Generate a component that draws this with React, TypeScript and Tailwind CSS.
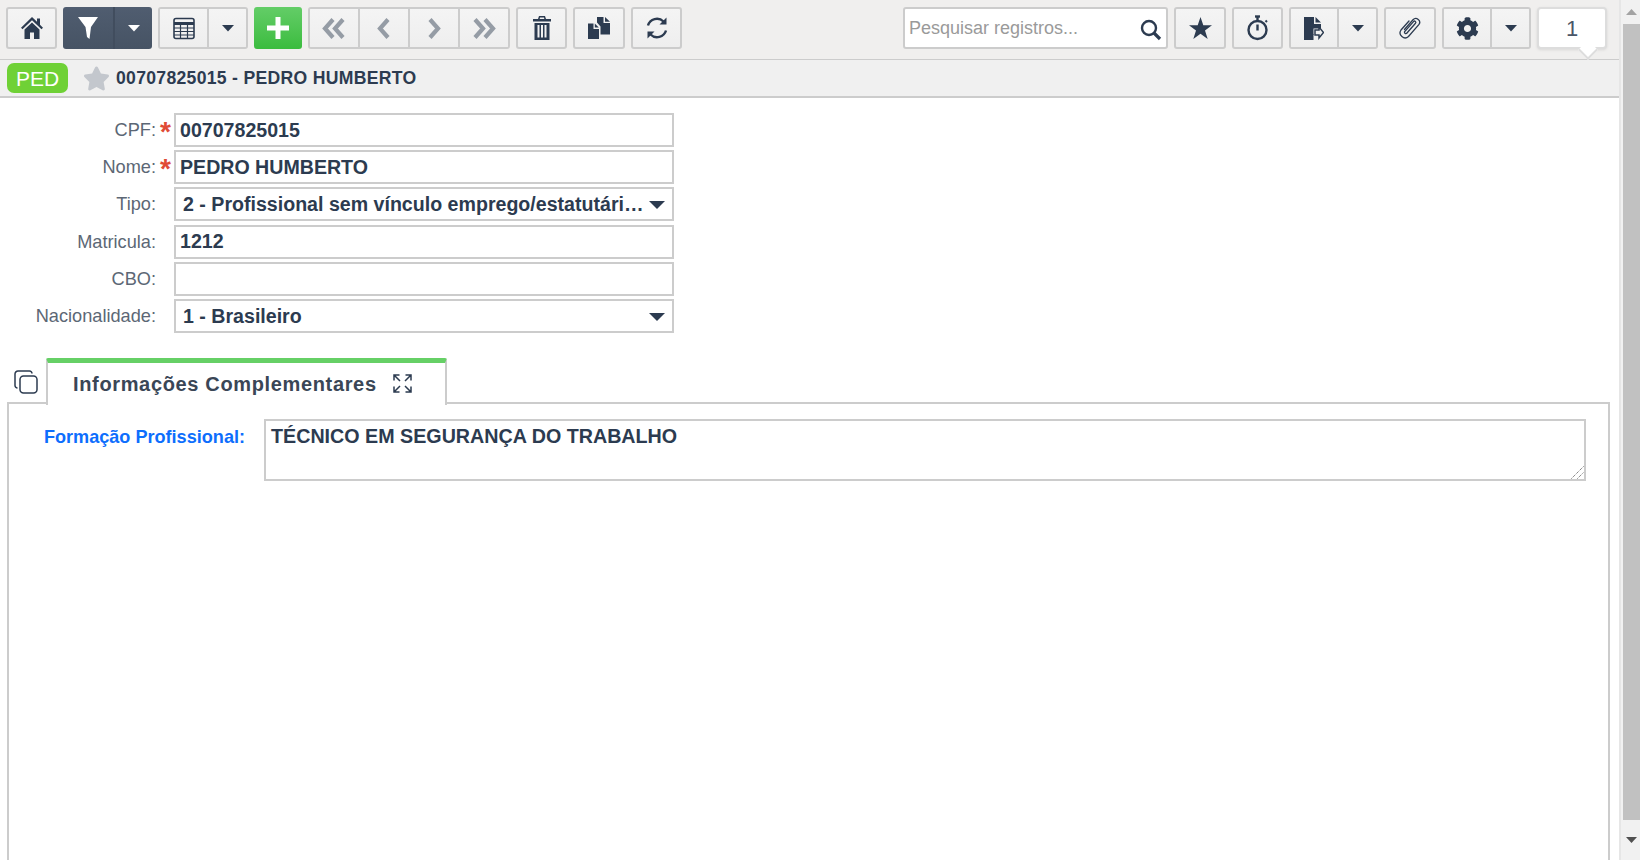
import React from "react";
import { FaStar, FaCog } from "react-icons/fa";

const fill = "bg-gradient-to-b from-[#f4f4f4] to-[#eeeeee]";
const cell = `flex h-full items-center justify-center ${fill}`;
const box = "flex h-[42px] shrink-0 overflow-hidden rounded-[3px] border-2 border-[#cccccc]";
const single = `flex h-[42px] shrink-0 items-center justify-center rounded-[3px] border-2 border-[#cccccc] ${fill}`;
const ink = "#2c3b50";

function Caret({ color = ink }: { color?: string }) {
  return (
    <svg width="14" height="8" viewBox="0 0 14 8"><path d="M1 1h12L7 7.5z" fill={color} /></svg>
  );
}

function Split({ w, main, color }: { w: string; main: React.ReactNode; color?: string }) {
  return (
    <div className={`${box} ${w}`}>
      <div className={`${cell} flex-1 border-r-2 border-[#cccccc]`}>{main}</div>
      <div className={`${cell} w-[37px]`}><Caret color={color} /></div>
    </div>
  );
}

function Chevron({ dir, double }: { dir: "l" | "r"; double?: boolean }) {
  const pts = dir === "l" ? (x: number) => `${x + 10},2.500 ${x + 2},11.500 ${x + 10},20.500` : (x: number) => `${x + 2},2.500 ${x + 10},11.500 ${x + 2},20.500`;
  return (
    <svg width="26" height="23" viewBox="0 0 26 23" fill="none" stroke="#959ca5" strokeWidth="4.200">
      {double ? (
        <>
          <polyline points={pts(2)} />
          <polyline points={pts(12)} />
        </>
      ) : (
        <polyline points={pts(7)} />
      )}
    </svg>
  );
}

function Field({ label, required, value, select }: { label: string; required?: boolean; value?: string; select?: boolean }) {
  return (
    <div className="flex h-[34px] items-center">
      <span className="w-[156px] pt-[1.500px] text-right text-[18.200px] text-[#5c6775]">{label}</span>
      <span className="flex h-full w-[18px] items-start justify-center pt-[5px] pl-[1px] text-[28px] font-bold leading-[28px] text-[#e04b35]">{required ? "*" : ""}</span>
      {select ? (
        <div className="flex h-full w-[500px] items-center border-2 border-[#cccccc] bg-white pl-[7px] pr-[7px] pt-[1.500px] text-[19.600px] font-bold text-[#2c3b50]">
          <span className="min-w-0 flex-1 whitespace-nowrap">{value}</span>
          <span className="ml-[2px] flex shrink-0"><svg width="16" height="8" viewBox="0 0 16 8"><path d="M0 0h16L8 8z" fill={ink} /></svg></span>
        </div>
      ) : (
        <input readOnly value={value ?? ""} className="h-full w-[500px] border-2 border-[#cccccc] bg-white px-[4px] text-[19.600px] font-bold text-[#2c3b50] outline-none" />
      )}
    </div>
  );
}

export default function App() {
  return (
    <div className="flex h-[860px] w-[1640px] overflow-hidden bg-white font-['Liberation_Sans',Arial,sans-serif]">
      <div className="flex w-[1619px] shrink-0 flex-col">
        {/* toolbar */}
        <div className="flex h-[59px] shrink-0 gap-[6px] bg-[#f0efee] pl-[6px] pr-[12px] pt-[7px]">
          <div className={`${single} w-[51px]`}>
            <svg width="22" height="22" viewBox="0 0 22 22" fill={ink}>
              <path d="M11 0 16 4.800V1.500h3v6.200l3 3-1.500 1.500L11 3.200 1.500 12.200 0 10.700z" />
              <path d="M3.500 12.500 11 5.500l7.500 7V22h-5.500v-6.500H9V22H3.500z" />
            </svg>
          </div>

          <div className="flex h-[42px] w-[89px] shrink-0 overflow-hidden rounded-[3px] bg-gradient-to-b from-[#505d70] to-[#465364]">
            <div className="flex flex-1 items-center justify-center border-r-2 border-[#414d5e]">
              <svg width="20" height="22" viewBox="0 0 20 22"><path d="M0 0h20l-7 10-1.500 12-2.500-2L7.500 10z" fill="#ffffff" /></svg>
            </div>
            <div className="flex w-[37px] items-center justify-center"><Caret color="#ffffff" /></div>
          </div>

          <Split w="w-[90px]" main={
            <svg width="22" height="23" viewBox="0 0 22 23" fill="none" stroke={ink}>
              <rect x="1" y="1.500" width="20" height="20" rx="2" strokeWidth="1.600" />
              <path d="M1 6.500h20" strokeWidth="3" />
              <path d="M1 11h20M1 14.500h20M1 18h20M7.500 6v15M14.500 6v15" strokeWidth="1.200" />
            </svg>
          } />

          <div className="flex h-[42px] w-[48px] shrink-0 items-center justify-center rounded-[3px] bg-gradient-to-b from-[#63cd67] to-[#3abc3e]">
            <svg width="22" height="22" viewBox="0 0 22 22" fill="#ffffff"><path d="M8.500 0h5v8.500H22v5h-8.500V22h-5v-8.500H0v-5h8.500z" /></svg>
          </div>

          <div className={`${box} w-[202px]`}>
            <div className={`${cell} flex-1 border-r-2 border-[#cccccc]`}><Chevron dir="l" double /></div>
            <div className={`${cell} flex-1 border-r-2 border-[#cccccc]`}><Chevron dir="l" /></div>
            <div className={`${cell} flex-1 border-r-2 border-[#cccccc]`}><Chevron dir="r" /></div>
            <div className={`${cell} flex-1`}><Chevron dir="r" double /></div>
          </div>

          <div className={`${single} w-[51px]`}>
            <svg width="18" height="24" viewBox="0 0 18 24" fill={ink}>
              <path d="M6 0h6l1 3h5v2.500H0V3h5zM7 1.500 6.700 3h4.600L11 1.500z" />
              <path fillRule="evenodd" d="M1.500 7h15v17h-15zM4.500 9v12.500h2V9zM8 9v12.500h2V9zM11.500 9v12.500h2V9z" />
            </svg>
          </div>

          <div className={`${single} w-[52px]`}>
            <svg width="22" height="22" viewBox="0 0 22 22" fill={ink}>
              <path d="M0 6.500h5.500v5.500h5.500V22H0z" />
              <path d="M6.800 6.500 10.800 10.500H6.800z" />
              <path d="M9 0h6.500v6h6.500v11.500h-9.500v-8L9 5.500z" />
              <path d="M17 0 22 4.800h-5z" />
            </svg>
          </div>

          <div className={`${single} w-[51px]`}>
            <svg width="22" height="24" viewBox="0 0 22 24" fill="none" stroke={ink} strokeWidth="2.400">
              <path d="M2 9.500A9.300 9.300 0 0 1 17.500 5.500" />
              <path d="M20 14.500A9.300 9.300 0 0 1 4.500 18.500" />
              <path d="M20.500 1.500v7h-7z" fill={ink} stroke="none" />
              <path d="M1.500 22.500v-7h7z" fill={ink} stroke="none" />
            </svg>
          </div>

          {/* search */}
          <div className="ml-auto flex h-[42px] w-[265px] shrink-0 items-center rounded-[3px] border-2 border-[#cccccc] bg-white pl-[4px] pr-[4px]">
            <input readOnly placeholder="Pesquisar registros..." className="min-w-0 flex-1 bg-transparent text-[18px] text-[#333] outline-none placeholder:text-[#9a9a9a]" />
            <svg className="mt-[4px]" width="22" height="22" viewBox="0 0 22 22" fill="none" stroke={ink}>
              <circle cx="9" cy="9" r="7" strokeWidth="2.400" />
              <path d="M14 14l6 6" strokeWidth="3.200" />
            </svg>
          </div>

          <div className={`${single} w-[52px]`}>
            <svg width="23" height="22" viewBox="0 0 23 22" fill={ink}><path d="M11.500 0l2.800 8.300H23l-7 5.200 2.700 8.500-7.200-5.200L4.300 22 7 13.500 0 8.300h8.700z" /></svg>
          </div>

          <div className={`${single} w-[51px]`}>
            <svg width="22" height="26" viewBox="0 0 22 26" fill="none" stroke={ink}>
              <circle cx="10.500" cy="15" r="9" strokeWidth="2.400" />
              <path d="M8 1.500h5" strokeWidth="2.400" />
              <path d="M10.500 2v3" strokeWidth="2.400" />
              <path d="M18.500 5.500l1.500 1.500" strokeWidth="2" />
              <path d="M10.500 9.500v6" strokeWidth="2.400" />
            </svg>
          </div>

          <Split w="w-[89px]" main={
            <svg width="20" height="23" viewBox="0 0 20 23" fill={ink}>
              <path d="M0 0h10v7h7v4.500H9.500V18H0z" />
              <path d="M0 17h9.500v6H0z" />
              <path d="M11.500 0 17 5.500h-5.500z" />
              <path d="M11 13h4v-3l4.500 5.500-4.500 5.500v-3h-4z" fill="none" stroke={ink} strokeWidth="1.500" />
            </svg>
          } />

          <div className={`${single} w-[52px]`}>
            <svg width="24" height="24" viewBox="0 0 24 24" fill="none" stroke={ink} strokeWidth="1.300" strokeLinecap="round">
              <path d="M6.500 13.500 15 3.800a3.800 3.800 0 0 1 5.800 4.900L10.500 20.500a5 5 0 0 1-7.500-6.500L11 5" />
              <path d="M8.500 17.500 17.500 7.300a1.300 1.300 0 0 0-2-1.700L6.500 15.800a1.500 1.500 0 0 0 2 1.700z" />
            </svg>
          </div>

          <Split w="w-[89px]" main={<FaCog size={23} color={ink} />} />

          <div className="relative flex h-[42px] w-[70px] shrink-0 items-center justify-center rounded-[4px] border-2 border-[#dddddd] bg-white text-[22px] text-[#4a5668] shadow-[0_1px_3px_rgba(0,0,0,0.1)]">
            1
            <span className="absolute right-[10px] top-[34px] h-[14px] w-[14px] rotate-45 border-b-2 border-r-2 border-[#dddddd] bg-white" />
          </div>
        </div>

        {/* title bar */}
        <div className="flex h-[39px] shrink-0 items-center border-t border-b-2 border-[#cccccc] bg-[#f0f0f0] pl-[7px]">
          <span className="flex h-[30px] w-[61px] items-center justify-center rounded-[7px] bg-[#6fd136] text-[21px] leading-none text-white">PED</span>
          <FaStar size={27} color="#c3c7cd" className="ml-[15px]" />
          <span className="ml-[6px] pt-[1px] text-[17.600px] font-bold tracking-[0.3px] text-[#2c3b50]">00707825015 - PEDRO HUMBERTO</span>
        </div>

        {/* form */}
        <div className="flex shrink-0 flex-col gap-[3.200px] pt-[15px]">
          <Field label="CPF:" required value="00707825015" />
          <Field label="Nome:" required value="PEDRO HUMBERTO" />
          <Field label="Tipo:" select value="2 - Profissional sem vínculo emprego/estatutári…" />
          <Field label="Matricula:" value="1212" />
          <Field label="CBO:" value="" />
          <Field label="Nacionalidade:" select value="1 - Brasileiro" />
        </div>

        {/* tabs */}
        <div className="ml-[7px] mt-[25px] flex h-[47px] shrink-0 items-end">
          <div className="flex h-full w-[39px] shrink-0 items-start pl-[7px] pt-[12px]">
            <svg width="24" height="24" viewBox="0 0 24 24" fill="none" stroke={ink} strokeWidth="1.500">
              <rect x="6" y="6" width="17" height="17" rx="3.500" />
              <path d="M3.500 18A2.500 2.500 0 0 1 1 15.500V4a3 3 0 0 1 3-3h11.500A2.500 2.500 0 0 1 18 3.500" />
            </svg>
          </div>
          <div className="relative z-10 flex h-full w-[401px] items-center rounded-t-[2px] border-x-2 border-t-[5px] border-x-[#cccccc] border-t-[#66d066] bg-white pl-[25px]">
            <span className="pt-[1px] text-[20px] font-semibold tracking-[0.650px] text-[#3a4656]">Informações Complementares</span>
            <svg className="ml-[16px]" width="19" height="19" viewBox="0 0 19 19" fill="none" stroke={ink} strokeWidth="1.500">
              <path d="M1 6.500V1h5.500M1 1l6 6M18 6.500V1h-5.500M18 1l-6 6M1 12.500V18h5.500M1 18l6-6M18 12.500V18h-5.500M18 18l-6-6" />
            </svg>
          </div>
        </div>

        <div className="-mt-[3px] ml-[7px] flex w-[1603px] flex-1 items-start border-x-2 border-t-2 border-[#cccccc] pt-[15px]">
          <span className="w-[236px] shrink-0 pt-[7px] text-right text-[18.100px] font-bold leading-[22px] text-[#0d6efd]">Formação Profissional:</span>
          <div className="relative ml-[19px] h-[62px] w-[1322px] shrink-0">
            <textarea
              readOnly
              defaultValue="TÉCNICO EM SEGURANÇA DO TRABALHO"
              className="h-full w-full resize-none border-2 border-[#cccccc] bg-white px-[5px] pt-[3px] text-[19.700px] font-bold leading-[24px] text-[#2c3b50] outline-none"
            />
            <svg className="absolute bottom-[2px] right-[2px]" width="13" height="13" viewBox="0 0 13 13" fill="none" stroke="#555555" strokeWidth="1" strokeDasharray="1 1">
              <path d="M0.500 12.500 12.500 0.500M6.500 12.500l6-6" />
            </svg>
          </div>
        </div>
      </div>

      {/* scrollbar */}
      <div className="flex w-[21px] shrink-0 flex-col border-l-2 border-[#e6e6e6] bg-[#f1f1f1]">
        <div className="flex h-[24px] items-center justify-center pl-[2px]"><svg width="11" height="6" viewBox="0 0 11 6"><path d="M5.500 0 11 6H0z" fill="#a3a3a3" /></svg></div>
        <div className="ml-[2px] h-[796px] bg-[#c1c1c1]" />
        <div className="flex flex-1 items-center justify-center pl-[2px]"><svg width="11" height="6" viewBox="0 0 11 6"><path d="M0 0h11L5.500 6z" fill="#505050" /></svg></div>
      </div>
    </div>
  );
}
